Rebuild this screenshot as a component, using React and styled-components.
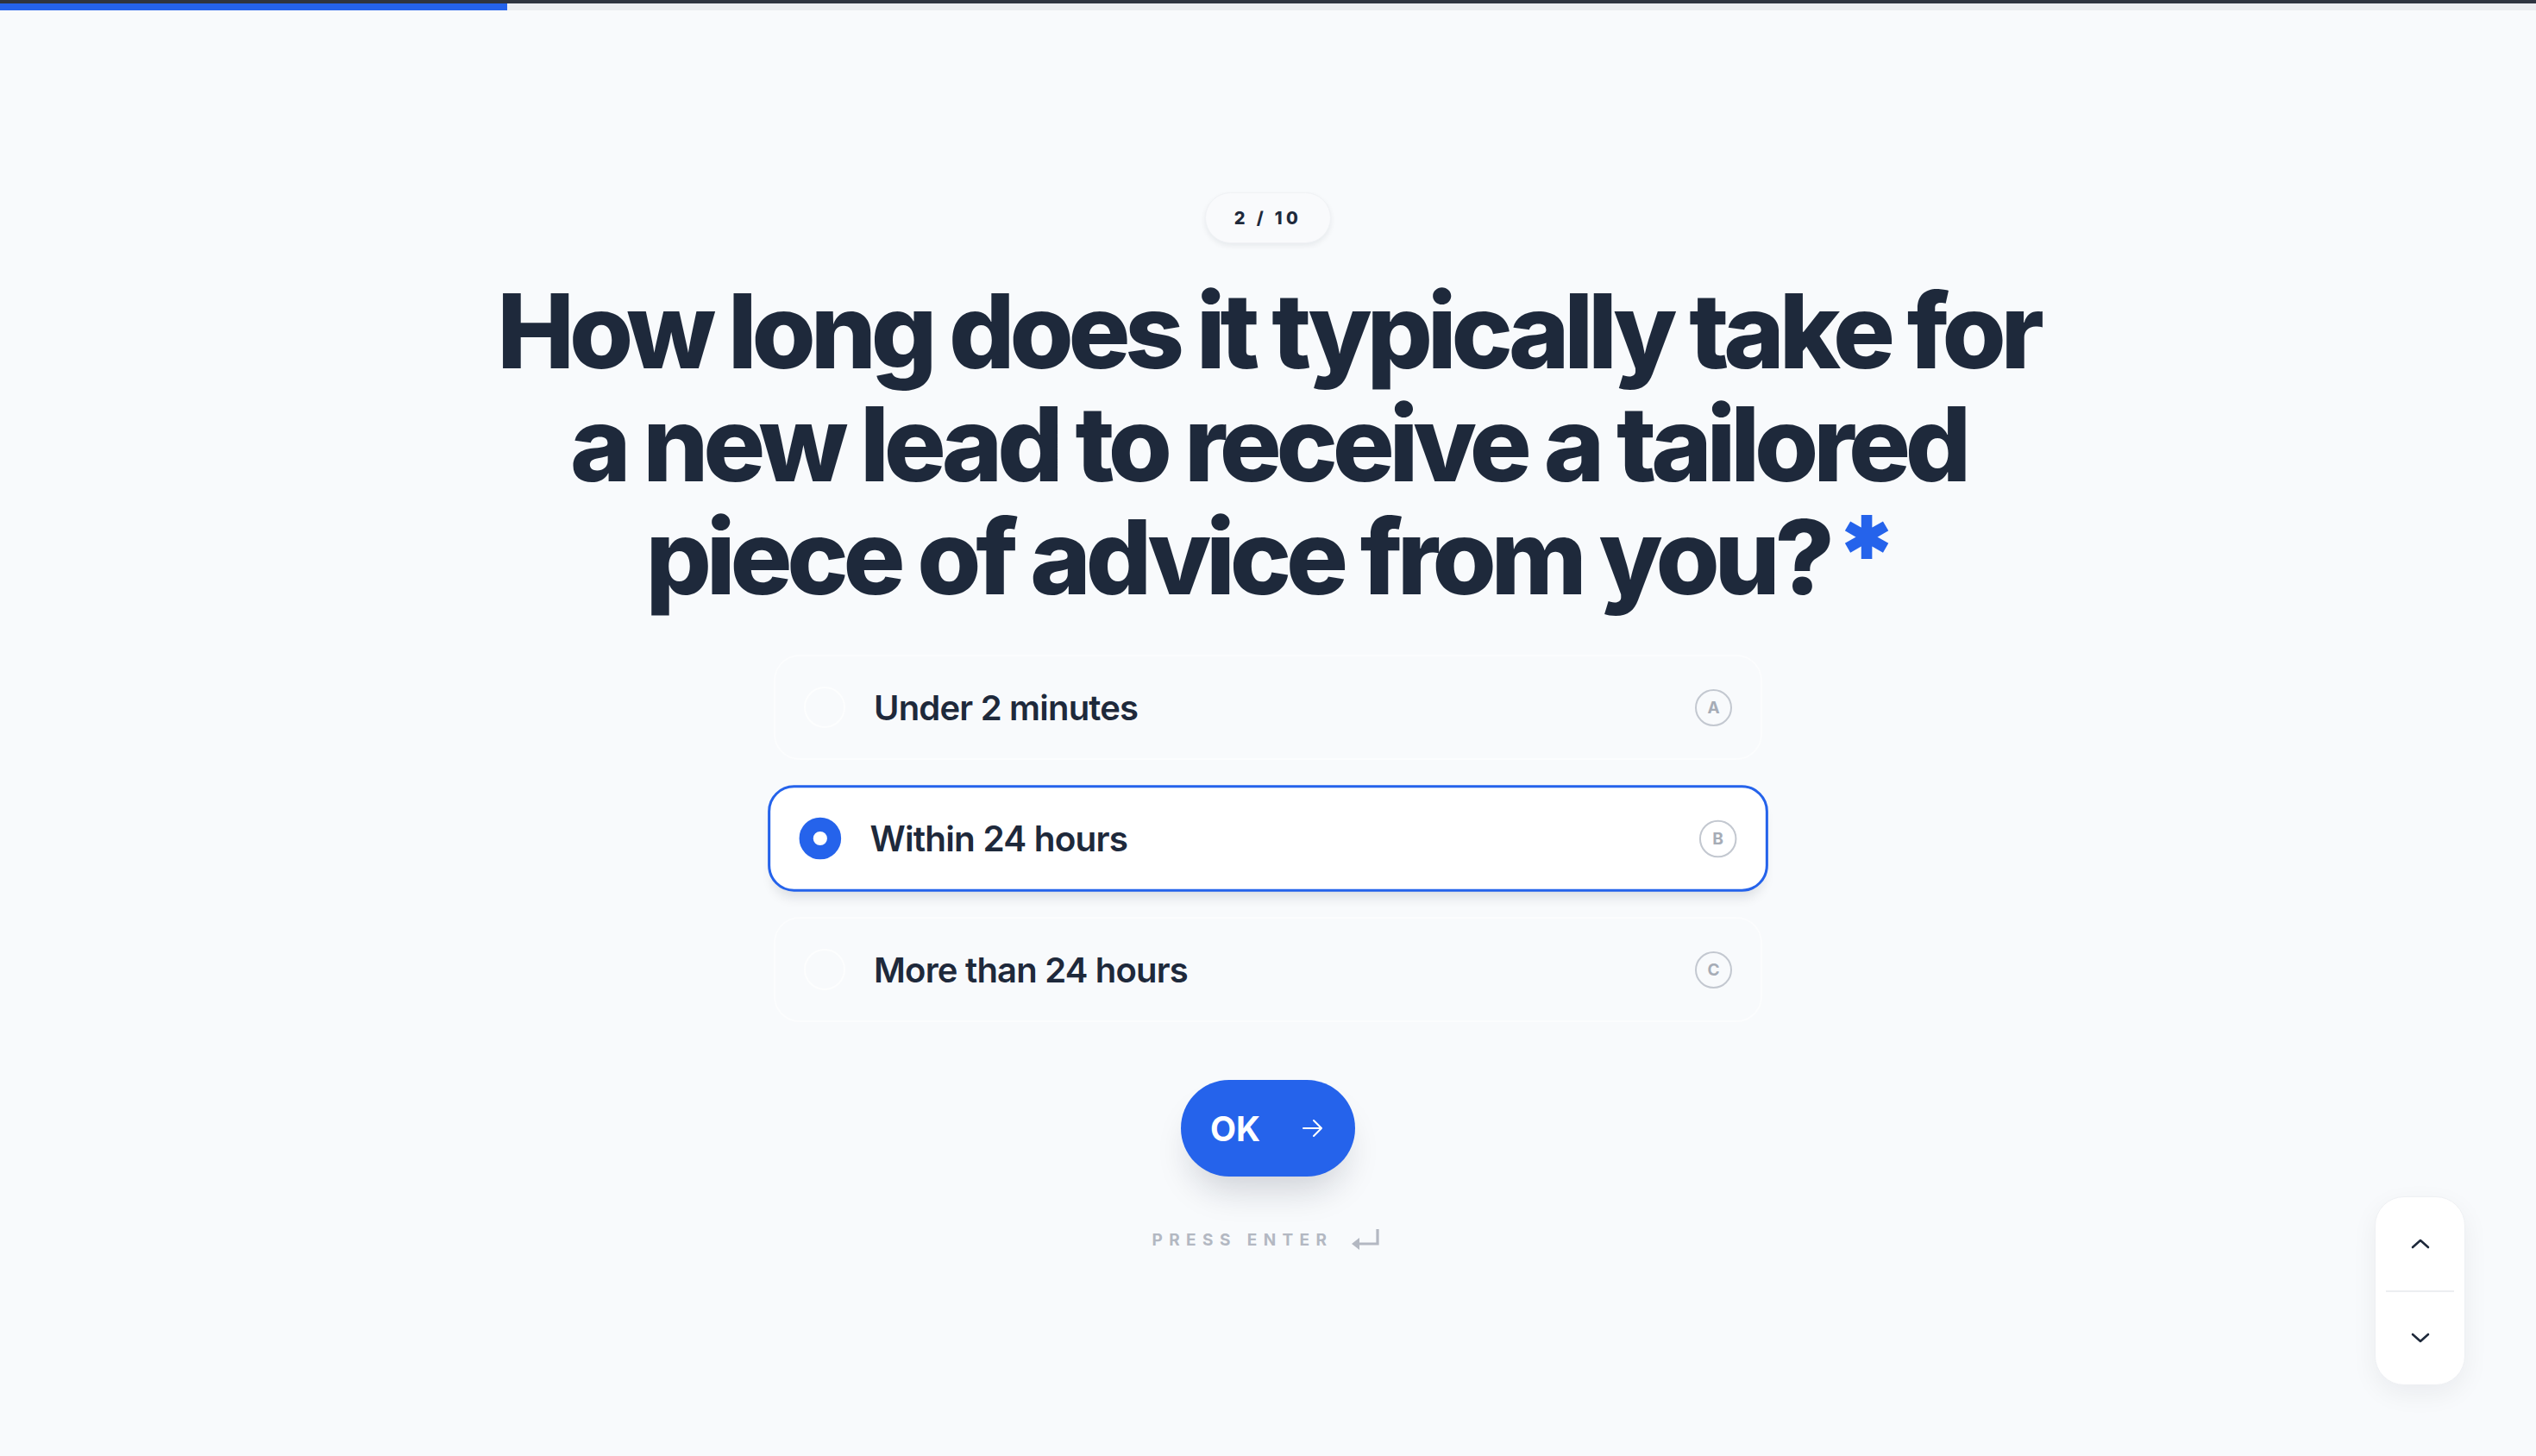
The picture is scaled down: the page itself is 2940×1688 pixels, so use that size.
import React from "react";
import styled, { createGlobalStyle, css } from "styled-components";

const GlobalStyle = createGlobalStyle`
  html, body {
    margin: 0;
    padding: 0;
    background: #f8fafc;
  }
  body {
    font-family: Inter, "Noto Sans", "Liberation Sans", sans-serif;
    color: #1e293b;
    -webkit-font-smoothing: antialiased;
  }
  * { box-sizing: border-box; }
`;

const Page = styled.div`
  min-height: 100vh;
  display: flex;
  flex-direction: column;
`;

const WindowEdge = styled.div`
  height: 4px;
  background: #2f3540;
`;

const ProgressTrack = styled.div`
  height: 8px;
  background: #eceef1;
`;

const ProgressFill = styled.div`
  height: 100%;
  background: #2563eb;
`;

const Main = styled.main`
  display: flex;
  flex-direction: column;
  align-items: center;
  padding-top: 211px;
`;

const Counter = styled.div`
  height: 59px;
  padding: 0 33px;
  display: flex;
  align-items: center;
  border-radius: 30px;
  background: #f9fafc;
  border: 1px solid #f0f2f5;
  box-shadow: 0 3px 6px rgba(15, 23, 42, 0.07);
  font-size: 20px;
  font-weight: 800;
  letter-spacing: 0.22em;
  color: #1e293b;
`;

const Question = styled.h1`
  margin: 36px 0 0;
  font-size: 120px;
  font-weight: 800;
  line-height: 131px;
  letter-spacing: -0.052em;
  text-align: center;
  color: #1e293b;
`;

const Line = styled.span`
  display: block;
  white-space: nowrap;
`;

const Required = styled.span`
  color: #2563eb;
  font-size: 0.56em;
  margin-left: 0.22em;
  vertical-align: 0.62em;
  line-height: 0;
  letter-spacing: 0;
`;

const Options = styled.div`
  margin-top: 48px;
  width: 1146px;
  display: flex;
  flex-direction: column;
  gap: 30px;
`;

const Option = styled.div`
  height: 122px;
  display: flex;
  align-items: center;
  padding: 0 33px;
  border-radius: 30px;
  border: 2px solid rgba(255, 255, 255, 0.5);
  background: transparent;
  ${(p) =>
    p.$selected &&
    css`
      background: #ffffff;
      border: 3px solid #2563eb;
      transform: scale(1.012);
      box-shadow: 0 12px 14px -6px rgba(15, 23, 42, 0.12);
    `}
`;

const Radio = styled.span`
  width: 48px;
  height: 48px;
  flex: none;
  border-radius: 50%;
  border: 2px solid rgba(255, 255, 255, 0.7);
  ${(p) =>
    p.$checked &&
    css`
      border: 16px solid #2563eb;
      background: #ffffff;
    `}
`;

const OptionLabel = styled.span`
  flex: 1;
  margin-left: 33px;
  font-size: 40px;
  font-weight: 600;
  letter-spacing: -0.02em;
  color: #1e293b;
`;

const KeyBadge = styled.span`
  width: 43px;
  height: 43px;
  flex: none;
  border-radius: 50%;
  border: 2px solid #c3c8d0;
  display: flex;
  align-items: center;
  justify-content: center;
  font-size: 19px;
  font-weight: 700;
  color: #a6acb6;
`;

const OkButton = styled.button`
  margin-top: 67px;
  width: 202px;
  height: 112px;
  border: none;
  border-radius: 56px;
  background: #2563eb;
  color: #ffffff;
  display: flex;
  align-items: center;
  justify-content: space-between;
  padding: 0 37px 0 34px;
  font-family: inherit;
  font-size: 39px;
  font-weight: 700;
  box-shadow: 0 26px 40px -12px rgba(15, 23, 42, 0.18);
  cursor: pointer;
`;

const Hint = styled.div`
  margin-top: 58px;
  height: 30px;
  display: flex;
  align-items: center;
  gap: 21px;
  margin-left: -4px;
`;

const HintText = styled.span`
  font-size: 19px;
  font-weight: 700;
  letter-spacing: 0.39em;
  color: #b3b8c2;
`;

const NavCard = styled.div`
  position: fixed;
  right: 82px;
  bottom: 82px;
  width: 105px;
  height: 219px;
  display: flex;
  flex-direction: column;
  align-items: stretch;
  background: #ffffff;
  border: 1px solid #eef0f3;
  border-radius: 34px;
  box-shadow: 0 10px 30px rgba(15, 23, 42, 0.06);
`;

const NavButton = styled.button`
  flex: 1;
  border: none;
  background: transparent;
  display: flex;
  align-items: center;
  justify-content: center;
  cursor: pointer;
`;

const NavDivider = styled.div`
  height: 2px;
  margin: 0 12px;
  background: #eceef1;
`;

const ArrowRight = () => (
  <svg width="24" height="22" viewBox="0 0 24 22" fill="none">
    <path
      d="M1 11H22M13 2L22 11L13 20"
      stroke="#ffffff"
      strokeWidth="2"
      strokeLinecap="round"
      strokeLinejoin="round"
    />
  </svg>
);

const EnterIcon = () => (
  <svg width="34" height="27" viewBox="0 0 34 27" fill="none">
    <path d="M31 1V18H9" stroke="#b3b8c2" strokeWidth="3.2" />
    <path d="M1 18L10 11V25Z" fill="#b3b8c2" />
  </svg>
);

const Chevron = ({ down }) => (
  <svg width="22" height="14" viewBox="0 0 22 14" fill="none">
    <path
      d={down ? "M2 3L11 11L20 3" : "M2 11L11 3L20 11"}
      stroke="#1e293b"
      strokeWidth="2.6"
      strokeLinecap="round"
      strokeLinejoin="round"
    />
  </svg>
);

const choices = [
  { key: "A", label: "Under 2 minutes" },
  { key: "B", label: "Within 24 hours" },
  { key: "C", label: "More than 24 hours" },
];

export default function App() {
  const step = 2;
  const total = 10;
  const selected = "B";

  return (
    <Page>
      <GlobalStyle />
      <WindowEdge />
      <ProgressTrack>
        <ProgressFill style={{ width: `${(step / total) * 100}%` }} />
      </ProgressTrack>
      <Main>
        <Counter>
          {step} / {total}
        </Counter>
        <Question>
          <Line>How long does it typically take for</Line>
          <Line>a new lead to receive a tailored</Line>
          <Line>
            piece of advice from you?<Required>✱</Required>
          </Line>
        </Question>
        <Options>
          {choices.map((c) => (
            <Option key={c.key} $selected={c.key === selected}>
              <Radio $checked={c.key === selected} />
              <OptionLabel>{c.label}</OptionLabel>
              <KeyBadge>{c.key}</KeyBadge>
            </Option>
          ))}
        </Options>
        <OkButton>
          OK
          <ArrowRight />
        </OkButton>
        <Hint>
          <HintText>PRESS ENTER</HintText>
          <EnterIcon />
        </Hint>
      </Main>
      <NavCard>
        <NavButton>
          <Chevron />
        </NavButton>
        <NavDivider />
        <NavButton>
          <Chevron down />
        </NavButton>
      </NavCard>
    </Page>
  );
}
